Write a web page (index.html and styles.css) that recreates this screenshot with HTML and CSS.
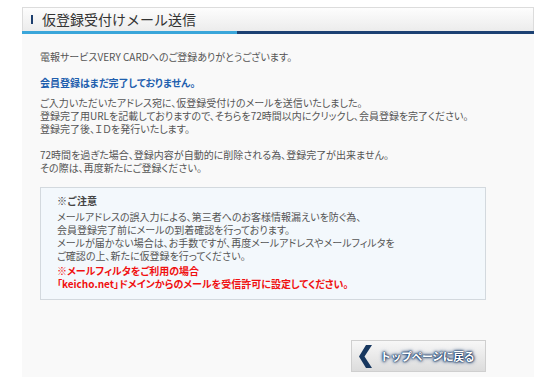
FILE: index.html
```html
<!DOCTYPE html>
<html lang="ja">
<head>
    <meta charset="UTF-8">
    <meta name="viewport" content="width=device-width, initial-scale=1.0">
    <title>仮登録受付けメール送信</title>
    <link rel="stylesheet" href="styles.css">
</head>
<body>
    <div class="page">
        <div class="page-title">
            <h1><span class="title-bar"></span>仮登録受付けメール送信</h1>
        </div>
        <div class="title-line"></div>

        <div class="content">
            <p>電報サービスVERY CARDへのご登録ありがとうございます。</p>
            <p class="notice-blue">会員登録はまだ完了しておりません。</p>
            <p>ご入力いただいたアドレス宛に、仮登録受付けのメールを送信いたしました。<br>
            登録完了用URLを記載しておりますので、そちらを72時間以内にクリックし、会員登録を完了ください。<br>
            登録完了後、ＩＤを発行いたします。</p>
            <p>72時間を過ぎた場合、登録内容が自動的に削除される為、登録完了が出来ません。<br>
            その際は、再度新たにご登録ください。</p>

            <div class="caution">
                <div class="caution-title">※ご注意</div>
                <p>メールアドレスの誤入力による、第三者へのお客様情報漏えいを防ぐ為、<br>
                会員登録完了前にメールの到着確認を行っております。<br>
                メールが届かない場合は、お手数ですが、再度メールアドレスやメールフィルタを<br>
                ご確認の上、新たに仮登録を行ってください。</p>
                <p class="caution-red">※メールフィルタをご利用の場合<br>
                「keicho.net」ドメインからのメールを受信許可に設定してください。</p>
            </div>

            <div class="back-row">
                <a href="#" class="back-btn">
                    <svg class="back-arrow" width="13" height="23" viewBox="0 0 13 23">
                        <polygon points="13,0 7,0 0,11.5 7,23 13,23 5.5,11.5" fill="#17375f"/>
                    </svg>
                    <span>トップページに戻る</span>
                </a>
            </div>
        </div>
    </div>
</body>
</html>
```

FILE: styles.css
```css
body {
    margin: 0;
    background: #fff;
    font-family: "Noto Sans CJK JP", "Noto Sans", sans-serif;
}

.page {
    margin-left: 22px;
    width: 512px;
    min-height: 377px;
    padding-top: 7px;
    box-sizing: border-box;
    background: linear-gradient(#fff 0, #fff 7px, #f9f9f9 7px);
}

.page-title {
    height: 23px;
    border: 1px solid #dcdcdc;
    border-bottom: none;
    background: linear-gradient(#fdfdfd, #ececec);
}

.page-title h1 {
    margin: 0;
    display: flex;
    align-items: center;
    height: 23px;
    padding-left: 8px;
    font-size: 14px;
    font-weight: normal;
    color: #333;
    line-height: 23px;
}

.title-bar {
    display: inline-block;
    width: 2px;
    height: 9px;
    background: #1d3f6e;
    margin-right: 9px;
}

.title-line {
    height: 3px;
    background: linear-gradient(to right, #3aa6da 0, #3aa6da 215px, #1c4173 215px);
}

.content {
    width: 446px;
    padding: 16px 0 0 18px;
}

.content p {
    margin: 0 0 13px;
    font-size: 10px;
    line-height: 13px;
    color: #555;
    font-feature-settings: "palt";
}

.content .notice-blue {
    margin-bottom: 7px;
    color: #1f5fae;
    font-weight: bold;
}

.caution {
    margin-top: 0;
    border: 1px solid #d3d9de;
    background: #f3f8fc;
    padding: 6px 10px 9px 16px;
}

.caution-title {
    font-size: 10px;
    line-height: 13px;
    font-weight: bold;
    color: #444;
    margin-bottom: 3px;
}

.caution p {
    margin: 0 0 2px;
    color: #555;
}

.content .caution-red {
    margin: 0;
    color: #f01010;
    font-weight: bold;
}

.back-row {
    display: flex;
    justify-content: flex-end;
    margin-top: 40px;
}

.back-btn {
    display: flex;
    align-items: center;
    width: 135px;
    height: 32px;
    box-sizing: border-box;
    padding-left: 7px;
    border: 1px solid #cfcfcf;
    background: linear-gradient(#f7f7f7, #dcdcdc);
    text-decoration: none;
}

.back-arrow {
    margin-right: 8px;
}

.back-btn span {
    color: #fff;
    font-size: 11px;
    font-weight: bold;
    letter-spacing: -0.5px;
    text-shadow: 0 0 1px #13325e, 0 0 2px #13325e, 0 0 3px #1a3a68, 0 0 4px #2a4f80;
}
```
